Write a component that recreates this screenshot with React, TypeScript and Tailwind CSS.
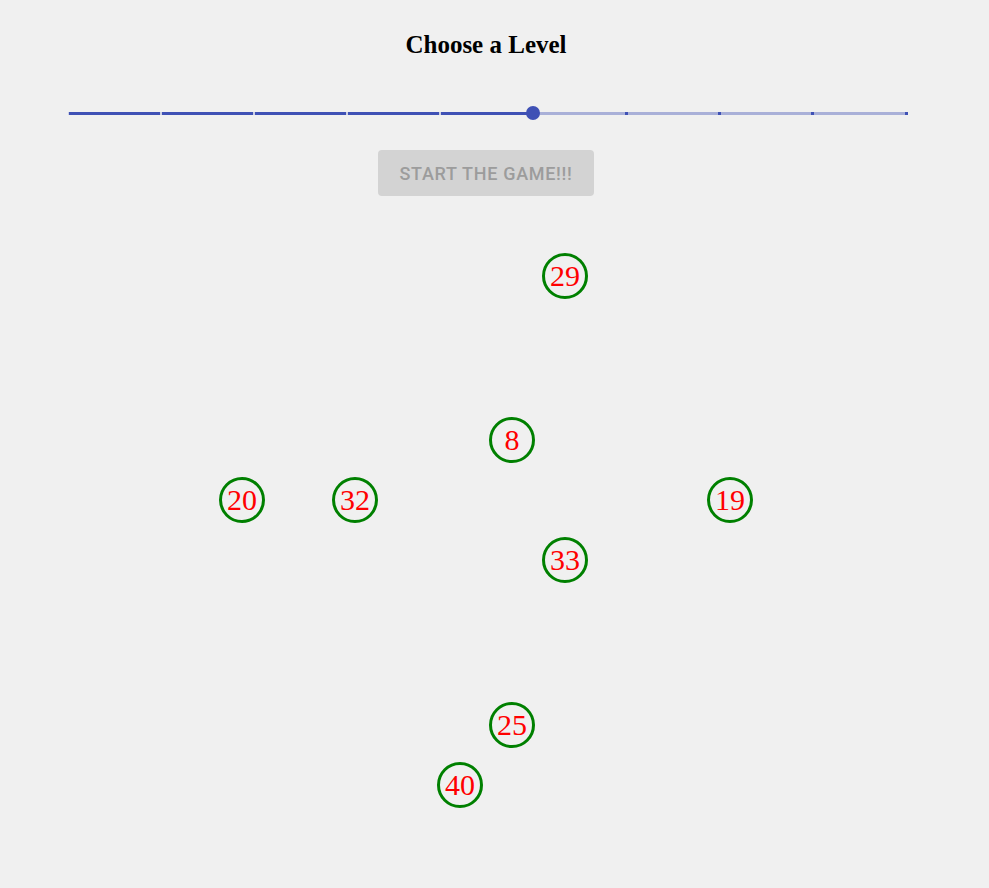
const MARKS = [0, 1, 2, 3, 4, 5, 6, 7, 8, 9];
const VALUE = 5;

// circle nodes on the board: [label, left, top] (canvas-relative, 46px circles)
const NODES: [number, number, number][] = [
  [29, 542, 33],
  [8, 489, 197],
  [20, 219, 257],
  [32, 332, 257],
  [19, 707, 257],
  [33, 542, 317],
  [25, 489, 482],
  [40, 437, 542],
];

function LevelSlider() {
  const pct = (VALUE / (MARKS.length - 1)) * 100;
  return (
    <div className="relative ml-[68px] h-[14px] w-[838px]">
      {/* rail */}
      <div className="absolute left-0 right-0 top-[5.5px] h-[3px] bg-[#3f51b5] opacity-40" />
      {/* active track */}
      <div className="absolute left-0 top-[5.5px] h-[3px] bg-[#3f51b5]" style={{ width: `${pct}%` }} />
      {MARKS.map((m) => {
        const left = (m / (MARKS.length - 1)) * 100;
        const active = m < VALUE;
        return (
          <span
            key={m}
            className={
              active
                ? "absolute top-[5.5px] h-[3px] w-[2px] bg-[#f0f0f0] opacity-80"
                : "absolute top-[5.5px] h-[3px] w-[3px] bg-[#3f51b5]"
            }
            style={{ left: `calc(${left}% - 1.5px)` }}
          />
        );
      })}
      {/* thumb */}
      <span
        className="absolute top-0 h-[14px] w-[14px] rounded-full bg-[#3f51b5]"
        style={{ left: `calc(${pct}% - 7.5px)` }}
      />
    </div>
  );
}

export default function App() {
  return (
    <div className="min-h-[888px] w-full bg-[#f0f0f0]">
      <div className="flex w-[972px] flex-col">
        <h1 className="mt-[31px] text-center font-['Liberation_Serif',serif] text-[25px] font-bold leading-[28px] text-black">
          Choose a Level
        </h1>

        <div className="mt-[47px]">
          <LevelSlider />
        </div>

        <div className="mt-[30px] flex justify-center">
          <button
            disabled
            className="h-[46px] w-[216px] rounded-[4px] bg-[#d3d3d3] font-['Roboto',sans-serif] text-[18px] font-medium tracking-[0.7px] text-[#9c9c9c]"
          >
            START THE GAME!!!
          </button>
        </div>

        {/* game board */}
        <div className="relative mt-[24px] h-[660px]">
          {NODES.map(([n, left, top]) => (
            <div
              key={n}
              className="absolute flex h-[46px] w-[46px] items-center justify-center rounded-full border-[3px] border-[#008000] font-['Liberation_Serif',serif] text-[30px] leading-none text-[#ff0000]"
              style={{ left, top }}
            >
              {n}
            </div>
          ))}
        </div>
      </div>
    </div>
  );
}
